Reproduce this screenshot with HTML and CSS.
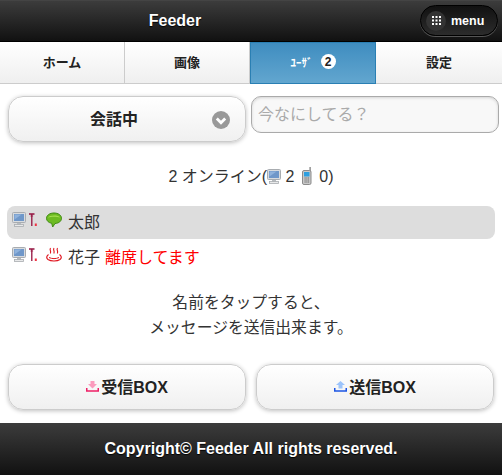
FILE: index.html
```html
<!DOCTYPE html>
<html lang="ja">
  <head>
    <meta charset="UTF-8" />
    <meta name="viewport" content="width=device-width, initial-scale=1.0" />
    <title>Feeder</title>
    <link rel="stylesheet" href="styles.css">
  </head>
  <body>
    <svg class="defs" width="0" height="0">
      <symbol id="pc" viewBox="0 0 14 15">
        <rect x="0.500" y="0.500" width="13" height="10" rx="1" fill="#d8dbde" stroke="#a8acb0"/>
        <rect x="2" y="2" width="10" height="7" fill="#6f97c9"/>
        <path d="M2.500 2.500h7l-7 5z" fill="#8fb2dc"/>
        <rect x="5" y="11" width="4" height="2" fill="#b8bcc0"/>
        <rect x="2.500" y="12.500" width="9" height="2" fill="#e8e9ea" stroke="#a8acb0" stroke-width="0.800"/>
      </symbol>
      <symbol id="signal" viewBox="0 0 8 14">
        <path d="M0 1h5.500M2.800 1v12" stroke="#94123f" stroke-width="1.300" fill="none"/>
        <path d="M1.500 3h2.600" stroke="#94123f" stroke-width="0.800" fill="none"/>
        <rect x="5.800" y="10.500" width="2" height="2.500" fill="#ee3344"/>
      </symbol>
      <symbol id="phone" viewBox="0 0 10 18">
        <rect x="7.500" y="0" width="1.200" height="5" fill="#777"/>
        <rect x="0.500" y="3.500" width="8.500" height="14" rx="1.500" fill="#c9c9c9" stroke="#8b8b8b"/>
        <rect x="2" y="5" width="5.500" height="4.500" fill="#2d9fe0"/>
        <path d="M2.500 11h1.200M4.300 11h1.200M6.100 11h1M2.500 13h1.200M4.300 13h1.200M6.100 13h1M2.500 15h1.200M4.300 15h1.200M6.100 15h1" stroke="#666" fill="none"/>
      </symbol>
    </svg>

    <header class="header">
      <h1>Feeder</h1>
      <a class="menu-btn" href="#">
        <span class="menu-icon">
          <svg width="9" height="9" viewBox="0 0 9 9" fill="#fff">
            <rect width="2" height="2"/><rect x="3.500" width="2" height="2"/><rect x="7" width="2" height="2"/>
            <rect y="3.500" width="2" height="2"/><rect x="3.500" y="3.500" width="2" height="2"/><rect x="7" y="3.500" width="2" height="2"/>
            <rect y="7" width="2" height="2"/><rect x="3.500" y="7" width="2" height="2"/><rect x="7" y="7" width="2" height="2"/>
          </svg>
        </span>
        <span>menu</span>
      </a>
    </header>

    <nav class="tabs">
      <a class="tab" href="#">ホーム</a>
      <a class="tab" href="#">画像</a>
      <a class="tab active" href="#"><span class="tab-small">ﾕｰｻﾞ</span><span class="count">2</span></a>
      <a class="tab" href="#">設定</a>
    </nav>

    <div class="status-row">
      <div class="select-btn">
        <span>会話中</span>
        <span class="arrow">
          <svg width="18" height="18" viewBox="0 0 18 18">
            <circle cx="9" cy="9" r="9" fill="#999"/>
            <path d="M4.800 7.500L9 11.700l4.200-4.200" stroke="#fff" stroke-width="2.800" fill="none"/>
          </svg>
        </span>
      </div>
      <input class="status-input" type="text" placeholder="今なにしてる？" />
    </div>

    <p class="online">2 オンライン(<svg class="ico" width="14" height="15"><use href="#pc"/></svg> 2 <svg class="ico phone" width="10" height="18"><use href="#phone"/></svg> 0)</p>

    <ul class="users">
      <li class="user selected">
        <svg class="ico" width="14" height="15"><use href="#pc"/></svg>
        <svg class="ico sig" width="8" height="14"><use href="#signal"/></svg>
        <svg class="ico state" width="16" height="16" viewBox="0 0 16 16">
          <path d="M8 1C3.800 1 .5 3.200.5 6.300c0 2.600 2.300 4.500 5.200 5l1 3.700 2.300-3.500c4-.2 6.500-2.500 6.500-5.200C15.500 3.200 12.200 1 8 1z" fill="#6dbb22" stroke="#3f8a12"/>
          <path d="M2 5.500C3 3.200 12 2.500 14 5.500 11 4.500 5 4.500 2 5.500z" fill="#a6e050"/>
        </svg>
        <span>太郎</span>
      </li>
      <li class="user">
        <svg class="ico" width="14" height="15"><use href="#pc"/></svg>
        <svg class="ico sig" width="8" height="14"><use href="#signal"/></svg>
        <svg class="ico state" width="16" height="16" viewBox="0 0 16 16" fill="none" stroke="#e0141e">
          <path d="M4.500 1c-1.500 2 1.200 3-.2 5.500M8 1c-1.500 2 1.200 3-.2 5.500M11.500 1c-1.500 2 1.200 3-.2 5.500" stroke-width="1.100"/>
          <path d="M2.500 7.500C.5 9 0 11 2 12.500c3 2 9 2 12 0 2-1.500 1.500-3.500-.5-5" stroke-width="1.200"/>
          <path d="M3 10.500c3 1.500 7 1.500 10 0" stroke-width="1"/>
        </svg>
        <span>花子</span>
        <span class="away">離席してます</span>
      </li>
    </ul>

    <p class="hint">名前をタップすると、<br>メッセージを送信出来ます。</p>

    <div class="box-row">
      <a class="box-btn" href="#">
        <svg class="box-ico" width="13" height="11" viewBox="0 0 13 11">
          <path d="M4.500 0h4v3h2.500l-4.500 4.500L2 3h2.500z" fill="#fb9bbd"/>
          <path d="M.75 7v3h11.500V7" fill="none" stroke="#ee1f66" stroke-width="1.500"/>
        </svg>受信BOX
      </a>
      <a class="box-btn" href="#">
        <svg class="box-ico" width="13" height="11" viewBox="0 0 13 11">
          <path d="M4.500 7.500V4H2L6.500 0 11 4H8.500v3.500z" fill="#9cc4fb"/>
          <path d="M.75 7v3h11.500V7" fill="none" stroke="#1c55e4" stroke-width="1.500"/>
        </svg>送信BOX
      </a>
    </div>

    <footer class="footer">Copyright© Feeder All rights reserved.</footer>
  </body>
</html>
```

FILE: styles.css
```css
* {
  margin: 0;
  padding: 0;
  box-sizing: border-box;
}

body {
  background-color: #fff;
  color: #333;
  font-family: "Liberation Sans", "Noto Sans CJK JP", Arial, sans-serif;
  font-size: 16px;
}

a {
  text-decoration: none;
  color: inherit;
}

.defs {
  display: block;
  height: 0;
}

.ico {
  vertical-align: -2px;
}

/* header */
.header {
  display: flex;
  justify-content: center;
  align-items: center;
  position: relative;
  height: 42px;
  padding-right: 152px;
  background: linear-gradient(#3c3c3c, #111);
  border-top: 1px solid #444;
  border-bottom: 1px solid #000;
}

.header h1 {
  color: #fff;
  font-size: 16px;
  font-weight: bold;
  text-shadow: 0 1px 1px #000;
}

.menu-btn {
  display: flex;
  align-items: center;
  gap: 5px;
  position: absolute;
  top: 4px;
  left: 420px;
  width: 78px;
  height: 31px;
  padding-left: 5px;
  background: linear-gradient(#111, #2c2c2c);
  border: 1px solid #000;
  border-radius: 16px;
  box-shadow: 0 1px 0 #555;
  color: #fff;
  font-size: 12.500px;
  font-weight: bold;
}

.menu-icon {
  display: flex;
  justify-content: center;
  align-items: center;
  width: 20px;
  height: 20px;
  background-color: #333;
  border-radius: 50%;
}

/* tabs */
.tabs {
  display: grid;
  grid-template-columns: 125px 125px 126px 126px;
  height: 42px;
}

.tab {
  display: flex;
  justify-content: center;
  align-items: center;
  padding-bottom: 3px;
  background: linear-gradient(#fff, #efefef);
  border-bottom: 1px solid #ccc;
  border-right: 1px solid #ccc;
  color: #222;
  font-size: 13px;
  font-weight: bold;
}

.tab:last-child {
  border-right: none;
}

.tab.active {
  background: linear-gradient(#3f8dc0, #62a6cf);
  border: 1px solid #2a7fb3;
  color: #fff;
}

.tab-small {
  font-size: 11px;
}

.count {
  display: flex;
  justify-content: center;
  align-items: center;
  width: 15px;
  height: 15px;
  margin-left: 8px;
  background-color: #fff;
  border-radius: 50%;
  color: #222;
  font-size: 12px;
}

/* status row */
.status-row {
  display: flex;
  align-items: flex-start;
  gap: 5px;
  padding: 12px 3px 0 8px;
}

.select-btn {
  display: flex;
  justify-content: center;
  align-items: center;
  position: relative;
  width: 238px;
  height: 46px;
  padding: 0 26px 3px 0;
  background: linear-gradient(#fff, #f0f0f0);
  border: 1px solid #ccc;
  border-radius: 15px;
  box-shadow: 0 1px 4px rgba(0, 0, 0, 0.25);
  color: #222;
  font-weight: bold;
}

.arrow {
  display: flex;
  position: absolute;
  top: 14px;
  right: 15px;
}

.status-input {
  width: 248px;
  height: 37px;
  padding: 0 6px;
  background-color: #f8f8f8;
  border: 1px solid #aaa;
  border-radius: 10px;
  box-shadow: inset 0 1px 3px rgba(0, 0, 0, 0.15);
  font-family: inherit;
  font-size: 16px;
}

.status-input::placeholder {
  color: #aaa;
}

.online {
  margin-top: 25px;
  line-height: 20px;
  text-align: center;
  font-size: 16px;
}

.phone {
  vertical-align: -3px;
  margin: 0 3px;
}

/* users */
.users {
  list-style: none;
  margin: 19px 7px 0;
}

.user {
  display: flex;
  align-items: center;
  height: 33px;
  padding: 0 0 3px 5px;
  margin-bottom: 2px;
  border-radius: 8px;
  color: #333;
  font-size: 16px;
}

.user .ico {
  margin-bottom: 3px;
}

.user.selected {
  background-color: #ddd;
}

.sig {
  margin-left: 3px;
}

.state {
  margin: 0 6px 0 9px;
}

.away {
  margin-left: 5px;
  color: #f00;
}

.hint {
  margin-top: 16px;
  line-height: 25px;
  text-align: center;
  font-size: 15.800px;
}

/* boxes */
.box-row {
  display: flex;
  gap: 10px;
  padding: 24px 8px 0;
}

.box-btn {
  display: flex;
  justify-content: center;
  align-items: center;
  gap: 2px;
  width: 238px;
  height: 46px;
  padding-bottom: 2px;
  background: linear-gradient(#fff, #f0f0f0);
  border: 1px solid #ccc;
  border-radius: 15px;
  box-shadow: 0 1px 4px rgba(0, 0, 0, 0.25);
  color: #222;
  font-weight: bold;
}

.footer {
  display: flex;
  justify-content: center;
  align-items: center;
  height: 52px;
  margin-top: 13px;
  background: linear-gradient(#3c3c3c, #111);
  color: #fff;
  font-size: 16px;
  font-weight: bold;
  text-shadow: 0 1px 1px #000;
}
```
